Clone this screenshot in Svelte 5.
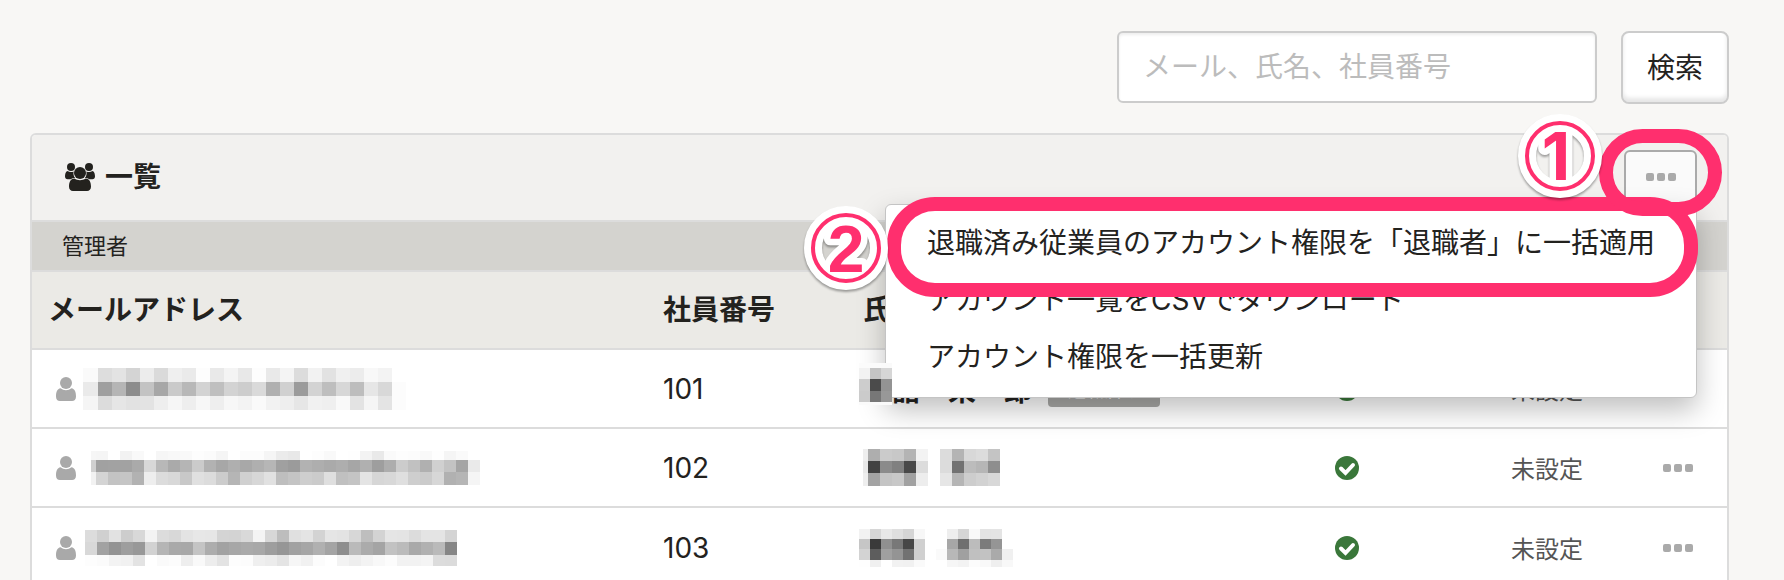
<script>
  // Account list, with the bulk action menu open and the two steps marked.
  // Addresses and names are masked: each mask is rows of grey levels (hex pairs).
  const accounts = [
    {
      no: '101',
      mail: {
        cell: 14, lead: 15, heights: [14, 14, 14],
        rows: [
          'fadde3d4ecdaefeafde9f4e8fde9f4dcf2e2f0ecf8f3ff',
          'ea9fb58cc3a7cab8d3bfd3cddab0d09bd3bed7bde6d8fc',
          'f5dce6e2e3eef6eef7eef7f3faf2eee6f1eff9e3f5e4fc'
        ]
      },
      name: {
        cell: 11, lead: 11, heights: [5, 11, 12, 11, 3],
        rows: ['fbfbfa', 'f2c4d6', 'cd4b93', 'cb7798', 'fafafa']
      },
      rest: '舘　栄一郎',
      label: '退職済み'
    },
    {
      no: '102',
      mail: {
        cell: 12, lead: 5, heights: [9, 12, 13],
        rows: [
          'f6f5fff2f9fff6f8f9fdfbf5fffcfcf5ebe8fffdf9fffef3e9fafdfcf9fef5faff',
          'd0a1a2a2aad8b8aab5cbb2a7afa8afb6a09bb2aeaaaea6b09eadccc1b0d0c3a5ea',
          'f2d4c3c5b2eedcd8c8e0dcccb5d0d7e1bec4cecbdfc0c4e4d6d8dfcecbd7b1b5f5'
        ]
      },
      name: {
        cell: 12, lead: 5, heights: [12, 12, 13],
        rows: ['eeaecbc8b4f3ffdcb4d8dcc4', 'e8428b8048dcffdc72bcb68e', 'eea3c4c8a1edffe6b5cdd2d8']
      }
    },
    {
      no: '103',
      mail: {
        cell: 12, lead: 12, heights: [12, 13, 11],
        rows: [
          'dcd0e2cdd8f3dcd8e3e7e6d4d3d9f4d7bde0e4d3e5e3d7bed3e5e4dce4e4d4',
          'd8a2939e98d2b5a9a8c4ada2a7aaa89e96a1a6b0a48ebaaba4c2bba9b1ba86',
          'fdfbf3f1e3fffafceef9ede3fdfcefece4f6f1fcfff3eef3f8fcf2f2f4dcdb'
        ]
      },
      name: {
        cell: 11, lead: 11, heights: [10, 10, 11, 7],
        rows: [
          'f2d6e8dfd5f7ffffeed6f9e3e4ff',
          'c63a907847d0ffffa76fbc7b95ff',
          'd35da09472d0fffab8a0c0c2aaf0',
          'fef0fff2f1fafffff6f3fcf9eff8'
        ]
      }
    }
  ];

  let menuOpen = $state(true);
  let query = $state('');

  function toCells(mask) {
    const cells = [];
    let y = 0;
    mask.rows.forEach((row, r) => {
      const tones = row.match(/../g);
      tones.forEach((tone, c) => {
        cells.push({
          x: c === 0 ? 0 : mask.lead + (c - 1) * mask.cell,
          y,
          w: c === 0 ? mask.lead : mask.cell,
          h: mask.heights[r],
          fill: `#${tone}${tone}${tone}`
        });
      });
      y += mask.heights[r];
    });
    return cells;
  }

  function maskWidth(mask) {
    return mask.lead + (mask.rows[0].length / 2 - 1) * mask.cell;
  }

  function maskHeight(mask) {
    return mask.heights.reduce((sum, h) => sum + h, 0);
  }
</script>

{#snippet masked(mask)}
  <svg class="mask" width={maskWidth(mask)} height={maskHeight(mask)} shape-rendering="crispEdges" aria-hidden="true">
    {#each toCells(mask) as c}
      <rect x={c.x} y={c.y} width={c.w} height={c.h} fill={c.fill} />
    {/each}
  </svg>
{/snippet}

{#snippet dots()}
  <svg width="30" height="8" viewBox="0 0 30 8" fill="#aaa" aria-hidden="true">
    <rect width="8" height="8" rx="2" /><rect x="11" width="8" height="8" rx="2" /><rect x="22" width="8" height="8" rx="2" />
  </svg>
{/snippet}

{#snippet step(n, x)}
  <svg class="step step-{n}" width="92" height="92" viewBox="-46 -46 92 92" aria-hidden="true">
    <g class="step-back">
      <circle r="33" fill="none" stroke="#fff" stroke-width="18" />
      <text {x} y="24" text-anchor="middle" stroke="#fff" stroke-width="13" fill="#fff">{n}</text>
    </g>
    <circle r="33" fill="none" stroke="#ff2f6e" stroke-width="4" />
    <text {x} y="24" text-anchor="middle" fill="#ff2f6e">{n}</text>
  </svg>
{/snippet}

<main class="page">
  <form class="search" onsubmit={(e) => e.preventDefault()}>
    <input type="text" aria-label="検索条件" placeholder="メール、氏名、社員番号" bind:value={query} />
    <button class="btn">検索</button>
  </form>

  <section class="panel">
    <header class="panel-hd">
      <svg class="users" width="30" height="28" viewBox="0 0 30 28" fill="currentColor" aria-hidden="true">
        <circle cx="6" cy="4" r="4" />
        <circle cx="24" cy="4" r="4" />
        <path d="M2.5 8C4.5 9.4 7 9.4 8.6 8.4C8.1 11 8.6 13.2 10.2 15C8.4 15 6.8 15.3 5.6 16.2H2.6C1 16.2 0 15.2 0 13.6C0 11.4.4 8.6 2.5 8Z" />
        <path d="M27.5 8C25.5 9.4 23 9.4 21.4 8.4C21.9 11 21.4 13.2 19.8 15C21.6 15 23.2 15.3 24.4 16.2H27.4C29 16.2 30 15.2 30 13.6C30 11.4 29.6 8.6 27.5 8Z" />
        <circle cx="15" cy="10" r="6" />
        <path d="M9.4 15.6C12.4 17.9 17.6 17.9 20.6 15.6C24.6 15.8 26 19.6 26 23.6C26 26.6 24.4 28 22 28H8C5.6 28 4 26.6 4 23.6C4 19.6 5.4 15.8 9.4 15.6Z" />
      </svg>
      <h2>一覧</h2>

      <div class="actions">
        <button class="more" aria-label="一括操作" aria-expanded={menuOpen} onclick={() => (menuOpen = !menuOpen)}>
          {@render dots()}
        </button>
        {#if menuOpen}
          <ul class="menu">
            <li class="marked"><a href="#retired">退職済み従業員のアカウント権限を「退職者」に一括適用</a></li>
            <li><a href="#csv">アカウント一覧をCSVでダウンロード</a></li>
            <li><a href="#update">アカウント権限を一括更新</a></li>
          </ul>
        {/if}
        <span class="ring"></span>
        {@render step(1, -4)}
        {@render step(2, 0)}
      </div>
    </header>

    <div class="group">管理者</div>

    <table>
      <colgroup>
        <col /><col class="c-no" /><col class="c-name" /><col class="c-check" /><col class="c-state" /><col class="c-more" />
      </colgroup>
      <thead>
        <tr><th>メールアドレス</th><th>社員番号</th><th>氏名</th><th></th><th></th><th></th></tr>
      </thead>
      <tbody>
        {#each accounts as a}
          <tr>
            <td>
              <div class="line mail">
                <svg width="20" height="24" viewBox="0 0 20 24" fill="#a9a9a9" aria-hidden="true">
                  <circle cx="10" cy="6" r="6" />
                  <path d="M4.6 11.2C7.6 13.8 12.4 13.8 15.4 11.2C19 11.6 20 15.4 20 19.4C20 22.6 18.4 24 16 24H4C1.6 24 0 22.6 0 19.4C0 15.4 1 11.6 4.6 11.2Z" />
                </svg>
                <div class="mail-{a.no}">{@render masked(a.mail)}</div>
              </div>
            </td>
            <td>{a.no}</td>
            <td>
              <div class="line name name-{a.no}">
                {@render masked(a.name)}
                {#if a.rest}<b>{a.rest}</b>{/if}
                {#if a.label}<span class="label">{a.label}</span>{/if}
              </div>
            </td>
            <td class="center">
              <svg class="check" width="24" height="24" viewBox="0 0 24 24" role="img" aria-label="有効">
                <circle cx="12" cy="12" r="12" fill="#3a773a" />
                <path d="M6 12.5L10.5 17L18 9" fill="none" stroke="#fff" stroke-width="4" stroke-linecap="round" />
              </svg>
            </td>
            <td class="center state">未設定</td>
            <td><button class="row-more" aria-label="操作">{@render dots()}</button></td>
          </tr>
        {/each}
      </tbody>
    </table>
  </section>
</main>

<style>
  :global(body) { background: #f8f7f5; }
  .page { padding: 31px 55px 0 30px; font-family: Inter, "Noto Sans CJK JP", sans-serif; font-size: 28px; line-height: 40px; color: #23221e; }
  button, input { font: inherit; color: inherit; box-sizing: border-box; }

  /* SEARCH */
  .search { display: flex; justify-content: flex-end; gap: 24px; margin-bottom: 29px; }
  .search input { width: 480px; height: 72px; padding: 0 24px; border: 2px solid #ccc; border-radius: 6px; background: #fff; box-shadow: inset 0 2px 3px #eee; outline: none; }
  .search input::placeholder { color: #bcbcbc; opacity: 1; }
  .btn { width: 108px; height: 73px; padding: 0; border: 2px solid #ccc; border-radius: 8px; background: #fff; box-shadow: inset 0 -4px 4px #e6e6e6; cursor: pointer; }

  /* PANEL */
  .panel { border: 2px solid #dcdcdc; border-radius: 6px; background: #fff; }
  .panel-hd { display: flex; align-items: center; height: 84px; padding: 0 30px 1px 33px; border-bottom: 2px solid #dcdcdc; border-radius: 4px 4px 0 0; background: #f2f1ef; }
  h2 { flex: 1; margin: 0 0 0 10px; font-size: 28px; font-weight: 700; }
  .group { padding: 4px 30px; font-size: 22px; background: #d4d3cf; border-bottom: 2px solid #dcdcdc; }

  /* MENU */
  .actions { position: relative; display: flex; }
  .more { width: 73px; height: 54px; padding: 0; display: grid; place-items: center; border: 2px solid #aaa; border-radius: 6px; background: #fafafa; cursor: pointer; }
  .menu { position: absolute; z-index: 2; top: 54px; right: 0; margin: 0; padding: 10px 0 11px; list-style: none; background: #fff; border: 1px solid #c4c4c4; border-radius: 6px; box-shadow: 0 12px 28px rgba(0, 0, 0, .25); white-space: nowrap; }
  .menu li { position: relative; }
  .menu a { display: block; padding: 8px 41px 9px; color: inherit; text-decoration: none; }

  /* STEP MARKS */
  .ring { position: absolute; z-index: 4; inset: -21px -25px -12px; border: 14px solid #ff2f6e; border-radius: 44px; pointer-events: none; }
  .marked::after { content: ""; position: absolute; z-index: 3; inset: -18px -2px -25px 1px; border: 14px solid #ff2f6e; border-radius: 48px; pointer-events: none; }
  .step { position: absolute; z-index: 5; pointer-events: none; font-family: Inter, sans-serif; font-size: 66px; font-weight: 700; }
  .step-1 { right: 91px; top: -40px; }
  .step-2 { right: 805px; top: 52px; font-family: "Liberation Sans", sans-serif; }
  .step-back { filter: drop-shadow(0 2px 1px rgba(0, 0, 0, .35)); stroke-linejoin: round; }

  /* TABLE */
  table { width: 100%; table-layout: fixed; border-collapse: separate; border-spacing: 0; }
  .c-no { width: 200px; }
  .c-name { width: 400px; }
  .c-check { width: 204px; }
  .c-state { width: 196px; }
  .c-more { width: 82px; }
  th, td { box-sizing: border-box; height: 79px; padding: 0 0 0 18px; border-bottom: 2px solid #dcdcdc; text-align: left; vertical-align: middle; white-space: nowrap; }
  th { height: 78px; background: #ebeae6; font-weight: 700; }
  th:first-child { padding-left: 16px; }
  tbody tr:last-child td { border-bottom: 0; }
  td.center { padding: 0; text-align: center; }
  .state { font-family: "Noto Sans CJK JP", sans-serif; font-size: 24px; color: #555; }
  .check, .mask { display: block; }
  .check { margin: 0 auto; }
  .line { display: flex; align-items: center; height: 40px; }
  .mail { padding-left: 6px; }
  .mail-101 { margin-left: 7px; }
  .mail-102 { margin-left: 15px; }
  .mail-103 { margin-left: 9px; }
  .name { font-family: "Noto Sans CJK JP", sans-serif; }
  .name .mask { position: relative; z-index: 3; }
  .name-101, .name-103 { margin-left: -4px; }
  .name-101 .mask { margin-bottom: 10px; }
  .label { margin-left: 16px; padding: 0 20px; border-radius: 4px; background: #a9a9a7; color: #fff; font-size: 18px; line-height: 36px; }
  .row-more { display: grid; place-items: center; padding: 8px 0; border: 0; background: none; cursor: pointer; }
</style>
